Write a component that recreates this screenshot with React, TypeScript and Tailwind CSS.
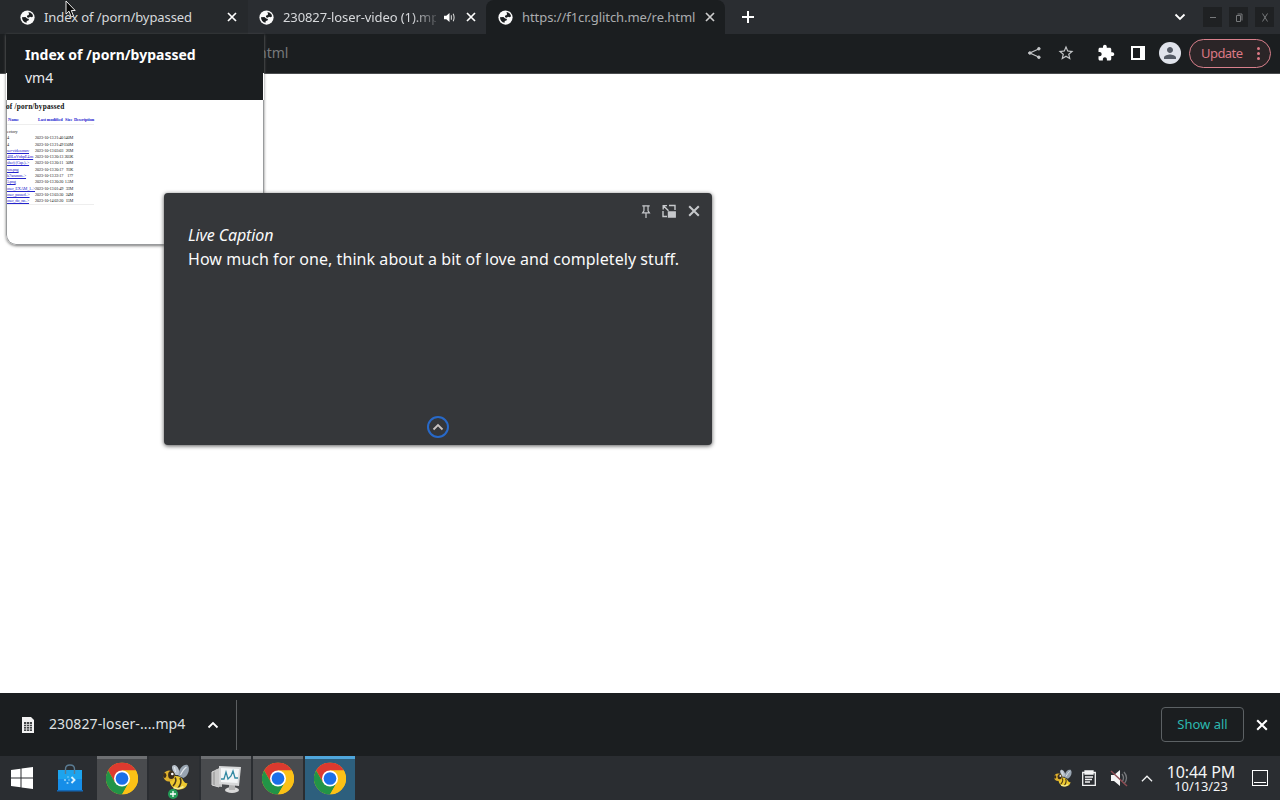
import React from "react";

const Globe = () => (
  <svg viewBox="0 0 16 16" className="h-[15px] w-[15px] shrink-0">
    <circle cx="8" cy="8" r="7.6" fill="#fafafa" />
    <path d="M8.9 2.5 C11.5 2.3 13.6 4.2 13.9 6.6 L12.6 7.6 L10.6 7.2 L9.4 8.3 L7.6 7.6 L7.4 6 L9.3 5.4 L9.6 4 Z" fill="#1b1e20" />
    <path d="M2.1 7.6 L5.8 7.4 L7.6 9 L9.6 9.6 L9 11.2 L7.2 11.8 L7 13.7 C4.2 13.2 2.1 10.8 2.1 7.6 Z" fill="#1b1e20" />
  </svg>
);

const Cross = ({ className }: { className: string }) => (
  <svg viewBox="0 0 10 10" className={className} fill="none" stroke="currentColor" strokeWidth="1.7">
    <path d="M1 1 9 9M9 1 1 9" />
  </svg>
);

const Chevron = ({ className, up, thin }: { className: string; up?: boolean; thin?: boolean }) => (
  <svg viewBox="0 0 12 8" className={className} fill="none" stroke="currentColor" strokeWidth={thin ? 1.1 : 1.8}>
    <path d={up ? "M1.5 6.5 6 2 10.5 6.5" : "M1.5 1.5 6 6 10.5 1.5"} />
  </svg>
);

const Mat = ({ d, className }: { d: string; className: string }) => (
  <svg viewBox="0 0 24 24" className={className} fill="currentColor">
    <path d={d} />
  </svg>
);

const Chrome = () => (
  <svg viewBox="0 0 48 48" className="h-8 w-8 -translate-y-[1.5px]">
    <circle cx="24" cy="24" r="24" fill="#fbc116" />
    <path d="M24 12 H44.8 A24 24 0 0 0 3.2 12 L13.6 30 24 24Z" fill="#dc3a2f" />
    <path d="M3.2 12 A24 24 0 0 0 24 48 L34.4 30 24 24 13.6 30Z" fill="#229447" />
    <path d="M24 48 A24 24 0 0 0 44.8 12 H24 V24 L34.4 30Z" fill="#fbc116" />
    <circle cx="24" cy="24" r="12" fill="#fff" />
    <circle cx="24" cy="24" r="9.5" fill="#1b6fe8" />
  </svg>
);

const Bee = ({ className }: { className: string }) => (
  <svg viewBox="0 0 28 26" className={className}>
    <path d="M14 11 C9 4 10 1 13 1 C17 2 18 7 18 11Z" fill="#b9c2cc" />
    <path d="M17 12 C17 4 22 0 26 1 C29 4 27 12 22 14Z" fill="#98a4b1" />
    <path d="M19 11 Q22 5 25 3M14 8 13 3" stroke="#e3e8ed" strokeWidth="1.2" fill="none" />
    <path d="M8 15 C12 10 20 12 22 17 Q24 20 26 19 Q25 25 18 25.5 C13 26 8 22 8 15Z" fill="#edc92f" />
    <path d="M13.5 13.5 Q16 17 11.5 22M18.5 14 Q21 18 16.5 24.5" stroke="#4a3a1b" strokeWidth="1.6" fill="none" />
    <circle cx="7.5" cy="12" r="5.6" fill="#deb02c" />
    <ellipse cx="9.8" cy="11" rx="3.2" ry="3.9" fill="#3a2c1c" />
    <circle cx="10.8" cy="10" r="1.3" fill="#fff" />
    <ellipse cx="3.2" cy="11.5" rx="1.7" ry="2.4" fill="#3a2c1c" />
    <path d="M12 23.5 Q17 26 22 22.5" stroke="#f6ed92" strokeWidth="1.8" fill="none" />
  </svg>
);

const Tile = ({ active, children }: { active?: boolean; children: React.ReactNode }) => (
  <div
    className={
      active
        ? "flex h-11 w-[50px] items-center justify-center border-t-[3px] border-[#4fa6dc] bg-[#2d5f7d]"
        : "flex h-11 w-[50px] items-center justify-center border-t-[3px] border-[#6d6f72] bg-[#494b4e]"
    }
  >
    {children}
  </div>
);

const files = [
  ["ectory", "", ""],
  ["4", "2023-10-13 21:40", "140M"],
  ["4", "2023-10-13 21:49", "150M"],
  ["ser-video.mov", "2023-10-13 03:03", "26M"],
  ["4BLuVnhpE4.m", "2023-10-13 20:13", "205K"],
  ["sher) (Cap.)..>", "2023-10-13 20:11", "50M"],
  ["wn.png", "2023-10-13 20:17", "93K"],
  ["k7sosmm..>", "2023-10-13 22:17", "177"],
  ["5.png", "2023-10-13 20:20", "1.5M"],
  ["oser_EXAM_1..>", "2023-10-13 01:49", "33M"],
  ["oser_passed..>", "2023-10-13 03:30", "24M"],
  ["oser_do_no..>", "2023-10-14 02:20", "15M"],
];

const HoverCard = () => (
  <section className="absolute left-[6px] top-[34px] h-[211px] w-[258px] overflow-hidden rounded-b-[10px] bg-white shadow-[0_1px_3px_#777]">
    <header className="mx-px h-[66px] bg-[#1b1e20] pl-[18px] pt-[10px] text-[#e8eaed]">
      <h2 className="text-[14px] font-bold leading-[22px] text-white">Index of /porn/bypassed</h2>
      <p className="text-[14px] leading-[23px]">vm4</p>
    </header>
    <div className="absolute left-0 top-0 h-[39px] w-px bg-[#1b1e20]" />
    <div className="absolute right-0 top-0 h-[39px] w-px bg-[#1b1e20]" />
    <div className="h-[145px] whitespace-nowrap rounded-b-[10px] border border-t-0 border-[#999b9d] font-['Liberation_Serif',serif]">
      <h3 className="-ml-px pt-px text-[7.3px] font-bold leading-[12px] tracking-[0.18px] text-[#111]">of /porn/bypassed</h3>
      <div className="mt-[3px] flex h-[9px] w-[87px] border-b border-[#eee] text-[4.4px] font-bold leading-[7px] text-[#1c1ccf]">
        <span className="w-[31px] pl-px">Name</span>
        <span className="w-[27px] tracking-[-0.1px]">Last modified</span>
        <span className="w-[9px]">Size</span>
        <span className="tracking-[-0.15px]">Description</span>
      </div>
      <div className="w-[87px] border-b border-[#eee] pt-[3px]">
        {files.map(([n, date, size], i) => (
          <div key={i} className="flex h-[6.3px] text-[4.3px] leading-[7px] text-[#222]">
            <span className={i > 2 ? "w-[28px] tracking-[-0.2px] text-[#2424cd] underline" : "w-[28px]"}>{n}</span>
            <span className="w-[28px] tracking-[-0.16px]">{date}</span>
            <span className="w-[10px] text-right tracking-[-0.25px]">{size}</span>
          </div>
        ))}
      </div>
    </div>
  </section>
);

const Caption = () => (
  <section className="absolute left-[164px] top-[193px] flex h-[252px] w-[548px] flex-col rounded-[4px] bg-[#35373a] text-[16px] leading-6 text-white shadow-[0_1px_4px_#555]">
    <div className="flex h-[30px] items-end justify-end pr-[12px] text-[#c6c8cb]">
      <svg viewBox="0 0 10 14" className="mr-[11px] h-[13px] w-[10px] -translate-y-[5px]" fill="none" stroke="currentColor" strokeWidth="1.3">
        <path d="M1 1H9M2.8 1V6.2L1.3 8.5H8.7L7.2 6.2V1M5 8.5V14" />
      </svg>
      <svg viewBox="0 0 14 14" className="mr-[12px] h-[14px] w-[14px] -translate-y-[5px]" fill="none" stroke="currentColor" strokeWidth="1.4">
        <path d="M7 1.5H13V6M1 7V12.5H5M1.2 5.5V1.6H5M1.4 1.8 6.5 6.8" />
        <path d="M6.5 8H13.2V13H6.5Z" fill="currentColor" />
      </svg>
      <Cross className="h-[12px] w-[12px] -translate-y-[6px]" />
    </div>
    <p className="pl-6 italic text-[#fafafa]"><span className="tracking-[-0.13px]">Live Caption</span></p>
    <p className="whitespace-nowrap pl-6 tracking-[0.06px] text-[#fafafa]">How much for one, think about a bit of love and completely stuff.</p>
    <div className="mt-auto flex h-[29px] justify-center">
      <div className="flex h-[22px] w-[22px] items-center justify-center rounded-full border-2 border-[#2869c8]">
        <Chevron up className="h-[8px] w-[12px] text-[#c8c2c0]" />
      </div>
    </div>
  </section>
);

export default function App() {
  return (
    <div className="relative flex h-[800px] w-[1280px] flex-col overflow-hidden bg-white font-['Noto_Sans',sans-serif]">
      <header className="flex h-[34px] bg-[#2a2d31] text-[13px] leading-[18px] text-[#d7d9dc]">
        <div className="flex w-[248px] items-center bg-[#26292c] pl-5 pr-[11px]">
          <Globe />
          <span className="ml-[9px] whitespace-nowrap tracking-[-0.08px]">Index of /porn/bypassed</span>
          <Cross className="ml-auto h-[10px] w-[10px] text-white" />
        </div>
        <div className="flex w-[238px] items-center pl-[11px] pr-[10px]">
          <Globe />
          <span className="ml-[9px] w-[153px] overflow-hidden whitespace-nowrap tracking-[-0.1px] [mask-image:linear-gradient(90deg,#000_84%,transparent_104%)]">230827-loser-video (1).mp4</span>
          <svg viewBox="0 0 12 12" className="ml-[8px] h-[11px] w-[11px]">
            <path d="M0 4H2.5L6 1V11L2.5 8H0Z" fill="#fff" />
            <path d="M8 3.5V8.5M10 2Q12 6 10 10" stroke="#ddd" strokeWidth="1.1" fill="none" />
          </svg>
          <Cross className="ml-auto h-[10px] w-[10px] text-white" />
        </div>
        <div className="flex w-[239px] items-center rounded-t-[8px] bg-[#1b1e20] pl-3 pr-[10px] text-[#aaacae]">
          <Globe />
          <span className="ml-[9px] whitespace-nowrap tracking-[-0.07px]">https://f1cr.glitch.me/re.html</span>
          <Cross className="ml-auto h-[10px] w-[10px] text-[#ccc]" />
        </div>
        <svg viewBox="0 0 12 12" className="ml-[17px] mt-[11px] h-[12px] w-[12px]" stroke="#fff" strokeWidth="2">
          <path d="M6 0V12M0 6H12" />
        </svg>
        <div className="ml-auto flex items-center pr-[6px] text-[#77797b]">
          <Chevron className="mr-[17px] h-[8px] w-[12px] text-white" />
          <span className="mr-[7px] flex h-[20px] w-[19px] items-center justify-center bg-[#1f2123]">
            <i className="h-px w-[6px] bg-[#77797b]" />
          </span>
          <span className="mr-[7px] flex h-[20px] w-[19px] items-center justify-center bg-[#1f2123]">
            <svg viewBox="0 0 8 9" className="h-[9px] w-[8px]" fill="none" stroke="currentColor">
              <path d="M1.5 2.5H5.5V8.5H1.5ZM2.5 1H7V7.5" />
            </svg>
          </span>
          <span className="flex h-[20px] w-[19px] items-center justify-center bg-[#1f2123]">
            <svg viewBox="0 0 6 9" className="h-[9px] w-[6px]" fill="none" stroke="currentColor"><path d="M.5.5 5.5 8.5M5.5.5.5 8.5" /></svg>
          </span>
        </div>
      </header>

      <div className="flex h-[40px] shrink-0 items-center border-b border-[#4a4c4e] bg-[#1b1e20] pb-px text-[#c4c6c8]">
        <span className="ml-[263px] flex w-[40px] justify-start overflow-hidden text-[14px] leading-5 text-[#77797b]"><span className="-ml-[5px]">html</span></span>
        <div className="ml-auto flex items-center pr-[9px]">
          <svg viewBox="0 0 14 14" className="mr-[16px] h-[14px] w-[13px]" fill="currentColor" stroke="currentColor">
            <path d="M12 2.5 2 7 12 11.5" fill="none" strokeWidth="1.3" />
            <circle cx="11.7" cy="2.4" r="1.4" /><circle cx="2" cy="7" r="1.4" /><circle cx="11.7" cy="11.6" r="1.4" />
          </svg>
          <Mat className="mr-[22px] h-[18px] w-[18px]" d="M22 9.24l-7.19-.62L12 2 9.19 8.63 2 9.24l5.46 4.73L5.82 21 12 17.27 18.18 21l-1.63-7.03L22 9.24zM12 15.4l-3.76 2.27 1-4.28-3.32-2.88 4.38-.38L12 6.1l1.71 4.04 4.38.38-3.32 2.88 1 4.28L12 15.4z" />
          <Mat className="mr-[16px] h-[18px] w-[18px] text-white" d="M20.5 11H19V7c0-1.1-.9-2-2-2h-4V3.5C13 2.12 11.88 1 10.5 1S8 2.12 8 3.5V5H4c-1.1 0-1.99.9-1.99 2v3.8H3.5c1.49 0 2.7 1.21 2.7 2.7s-1.21 2.7-2.7 2.7H2V20c0 1.1.9 2 2 2h3.8v-1.5c0-1.49 1.21-2.7 2.7-2.7 1.49 0 2.7 1.21 2.7 2.7V22H17c1.1 0 2-.9 2-2v-4h1.5c1.38 0 2.5-1.12 2.5-2.5S21.88 11 20.5 11z" />
          <span className="mr-[14px] h-[14px] w-[14px] border-2 border-r-[5px] border-white" />
          <span className="mr-[8px] flex h-[22px] w-[22px] items-center justify-center rounded-full bg-[#e0e3eb] text-[#555b66]">
            <Mat className="h-[18px] w-[18px]" d="M12 12c2.21 0 4-1.79 4-4s-1.79-4-4-4-4 1.79-4 4 1.79 4 4 4zm0 2c-2.67 0-8 1.34-8 4v2h16v-2c0-2.66-5.33-4-8-4z" />
          </span>
          <button className="flex h-[29px] w-[82px] items-center justify-between rounded-full border border-[#d9808c] bg-[#2b2527] pl-[11px] pr-[10px] text-[13px] text-[#dc7985]">
            <span className="translate-y-px tracking-[-0.55px]">Update</span>
            <span className="flex flex-col gap-[2px]">
              <i className="h-[3px] w-[3px] rounded-full bg-[#dc7985]" /><i className="h-[3px] w-[3px] rounded-full bg-[#dc7985]" /><i className="h-[3px] w-[3px] rounded-full bg-[#dc7985]" />
            </span>
          </button>
        </div>
      </div>

      <main className="flex-1 bg-white" />

      <section className="flex h-[63px] shrink-0 items-center bg-[#1b1e20] text-[#dfe1e3]">
        <svg viewBox="0 0 12 16" className="ml-[22px] h-[16px] w-[12px]">
          <path d="M0 0H9L12 3V16H0Z" fill="#f2f2f2" />
          <path d="M2 5H10V14H2Z" fill="#424547" />
          <path d="M4.5 5V14M7.5 5V14M2 7.5H10M2 9.5H10M2 12H10" stroke="#ddd" strokeWidth=".8" />
        </svg>
        <span className="ml-[15px] w-[137px] whitespace-nowrap pb-[2px] text-[14px] tracking-[0.11px]">230827-loser-....mp4</span>
        <Chevron up className="ml-[21px] h-[8px] w-[12px] text-white" />
        <span className="ml-[17px] h-[50px] w-px bg-[#5c5f61]" />
        <button className="ml-auto h-[35px] w-[83px] rounded-[4px] border border-[#5c6164] text-[13px] text-[#2cb9b0]">Show all</button>
        <Cross className="ml-[12px] mr-[12px] h-[12px] w-[12px] text-white" />
      </section>

      <footer className="flex h-[44px] shrink-0 items-center bg-[#2a2d31]">
        <svg viewBox="0 0 22 22" className="ml-[11px] h-[22px] w-[22px]" fill="#fff">
          <path d="M0 3 9.5 1.7V10.4H0ZM10.5 1.5 22 0V10.4H10.5ZM0 11.4H9.5V20.2L0 18.9ZM10.5 11.4H22V22L10.5 20.4Z" />
        </svg>
        <svg viewBox="0 0 26 28" className="ml-[24px] h-[28px] w-[26px]">
          <path d="M1 6H25V26H1Z" fill="#168ee8" /><path d="M1 6H25V15H1Z" fill="#1da4ee" /><path d="M0 26H26V27.5H0Z" fill="#1269b8" />
          <path d="M8.5 10V5Q8.5 1 13 1Q17.5 1 17.5 5V10" fill="none" stroke="#5b7c93" strokeWidth="1.4" />
          <path d="M14.5 13 17.5 16 14.5 19" stroke="#d9f2ff" strokeWidth="1.9" fill="none" />
          <g fill="#8fd2f8"><circle cx="8" cy="16" r="1.1" /><circle cx="11" cy="13" r=".8" /><circle cx="10.5" cy="19" r="1.1" /><circle cx="12" cy="16" r=".8" /></g>
        </svg>
        <div className="ml-[14px] flex gap-[2px]">
          <Tile><Chrome /></Tile>
          <div className="relative flex w-[50px] items-center justify-center bg-[#303235]">
            <Bee className="h-[26px] w-[29px] -translate-y-px translate-x-px" />
            <svg viewBox="0 0 10 10" className="absolute bottom-px left-[19px] h-[10px] w-[10px]">
              <circle cx="5" cy="5" r="5" fill="#239b57" /><path d="M5 2V8M2 5H8" stroke="#fff" strokeWidth="1.3" />
            </svg>
          </div>
          <Tile>
            <svg viewBox="0 0 32 30" className="h-[30px] w-[32px] -translate-y-px">
              <path d="M2 8 9 5V23L2 21Z" fill="#aaa" stroke="#ddd" /><path d="M5 6 12 3V23L5 22Z" fill="#c7c7c7" />
              <ellipse cx="22" cy="26" rx="7" ry="3" fill="#d9d9d9" /><path d="M19 20H25V26H19Z" fill="#b4b4b4" />
              <path d="M9 2 31 3 29 22 9 20Z" fill="#d7d8d9" /><path d="M11 4 29 5 27.5 19 11 18Z" fill="#f4f6f7" />
              <path d="M11 15H14L16 8 18 15 21 12 23 7 25 14H28" fill="none" stroke="#3289a3" strokeWidth="1.3" />
            </svg>
          </Tile>
          <Tile><Chrome /></Tile>
          <Tile active><Chrome /></Tile>
        </div>
        <div className="ml-auto flex items-center pr-[12px] text-[#f3f4f5]">
          <Bee className="mr-[10px] h-[18px] w-[19px]" />
          <svg viewBox="0 0 14 16" className="mr-[14px] h-[16px] w-[14px]" fill="none" stroke="currentColor" strokeWidth="1.3">
            <path d="M.7 2.5H13.3V15.3H.7Z" /><path d="M3 1H11V4H3Z" fill="currentColor" /><path d="M3 7H11M3 9.5H10M3 12H8" />
          </svg>
          <svg viewBox="0 0 18 18" className="mr-[12px] h-[18px] w-[18px]" fill="none">
            <path d="M1 6H4L10 1V17L4 12H1Z" fill="#f5f5f5" /><path d="M12 5Q15 9 12 13M14 3Q19 9 14 15" stroke="#77797c" strokeWidth="1.3" /><path d="M1 2 17 17" stroke="#8e4b52" strokeWidth="1.4" />
          </svg>
          <Chevron up thin className="mr-[11px] h-[9px] w-[14px]" />
          <div className="flex w-[72px] flex-col items-center whitespace-nowrap text-center">
            <span className="text-[16px] leading-[16px] tracking-[-0.1px]">10:44 PM</span>
            <span className="text-[12.8px] leading-[13px]">10/13/23</span>
          </div>
          <span className="ml-[15px] flex h-[16px] w-[16px] items-end justify-center border border-white pb-[2px]"><i className="h-px w-[12px] bg-white" /></span>
        </div>
      </footer>

      <HoverCard />
      <Caption />
      <svg viewBox="0 0 11 18" className="absolute left-[65px] top-0 h-[18px] w-[11px]">
        <path d="M1 1V14L4 11.2 6.2 17 8.5 16 6.3 10.5H10.2Z" fill="#080808" stroke="#fff" strokeWidth=".9" />
      </svg>
    </div>
  );
}
